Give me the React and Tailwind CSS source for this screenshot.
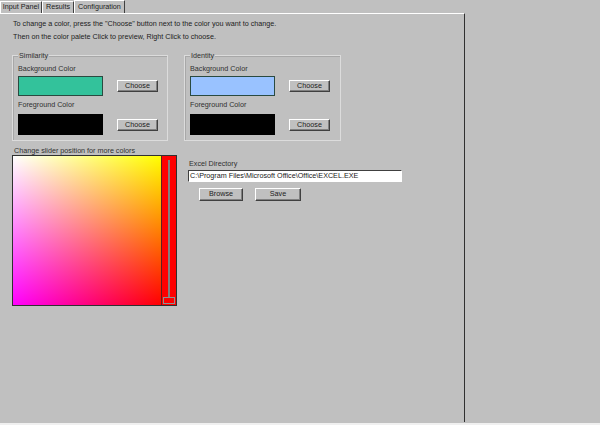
const font = { fontFamily: '"Liberation Sans", Arial, sans-serif' };

function Button({ label, className = '' }) {
  return (
    <div
      className={`flex items-center justify-center border border-t-white border-l-white border-r-[#404040] border-b-[#404040] bg-[#c0c0c0] text-[7.2px] text-[#202020] shadow-[inset_-1px_-1px_0_#808080] ${className}`}
    >
      {label}
    </div>
  );
}

function ColorGroup({ title, bg, className = '' }) {
  return (
    <div className={`relative h-[86px] border border-[#dcdcdc] shadow-[inset_1px_1px_0_#a8a8a8] ${className}`}>
      <span className="absolute -top-[5px] left-[5px] bg-[#c0c0c0] px-[1px] text-[7.2px] leading-[9px] text-[#303030]">
        {title}
      </span>
      <div className="flex flex-col px-[5px] pt-[8px]">
        <div className="text-[7.2px] leading-[9px] text-[#303030]">Background Color</div>
        <div className="mt-[3px] flex items-start">
          <div className="h-[20px] w-[85px] border border-[#2a4a40]" style={{ backgroundColor: bg }} />
          <Button label="Choose" className="ml-[14px] mt-[4px] h-[12px] w-[41px]" />
        </div>
        <div className="mt-[4px] text-[7.2px] leading-[9px] text-[#303030]">Foreground Color</div>
        <div className="mt-[5px] flex items-start">
          <div className="h-[21px] w-[85px] bg-black" />
          <Button label="Choose" className="ml-[14px] mt-[5px] h-[12px] w-[41px]" />
        </div>
      </div>
    </div>
  );
}

function Tab({ label, active, className = '' }) {
  return (
    <div
      className={`flex items-center justify-center whitespace-nowrap border-l border-t border-r border-l-white border-t-white border-r-[#404040] text-[7.2px] text-[#202020] ${active ? 'h-[13px]' : 'mt-[1px] h-[12px]'} ${className}`}
    >
      {label}
    </div>
  );
}

export default function App() {
  return (
    <div className="relative flex h-[425px] w-[600px] flex-col overflow-hidden bg-[#c0c0c0]" style={font}>
      <div className="flex h-[13px] items-end">
        <Tab label="Input Panel" className="w-[42px]" />
        <Tab label="Results" className="w-[32px]" />
        <Tab label="Configuration" active className="w-[51px]" />
      </div>

      <div className="flex h-[409px] w-[465px] flex-col border-t border-r border-t-white border-r-[#303030] pl-[12px]">
        <div className="pl-[1px] pt-[3px] text-[7.2px] leading-[13px] text-[#202020]">
          <div>To change a color, press the "Choose" button next to the color you want to change.</div>
          <div>Then on the color palete Click to preview, Right Click to choose.</div>
        </div>

        <div className="mt-[12px] flex gap-[16px]">
          <ColorGroup title="Similarity" bg="#33c29b" className="w-[156px]" />
          <ColorGroup title="Identity" bg="#99c2ff" className="w-[157px]" />
        </div>

        <div className="mt-[5px] flex">
          <div className="flex flex-col">
            <div className="pl-[2px] text-[7.2px] leading-[9px] text-[#303030]">Change slider position for more colors</div>
            <div className="flex h-[151px] w-[165px] border border-[#303030]">
              <div className="flex-1 bg-[#ff0000] bg-[linear-gradient(to_right,#0000ff,#000000),linear-gradient(to_bottom,#00ff00,#000000)] bg-blend-screen" />
              <div className="relative w-[15px] border-l border-[#602020] bg-[#ff0000]">
                <div className="absolute left-[6px] top-[4px] h-[137px] w-[2px] bg-[#808080]" />
                <div className="absolute bottom-[1px] left-[1px] h-[7px] w-[12px] border border-[#909090] bg-[#ff0000]" />
              </div>
            </div>
          </div>

          <div className="ml-[11px] mt-[13px] flex flex-col">
            <div className="pl-[1px] text-[7.2px] leading-[9px] text-[#303030]">Excel Directory</div>
            <div className="mt-[2px] flex h-[12px] w-[214px] items-center border border-t-[#404040] border-l-[#404040] border-r-white border-b-white bg-white pl-[1px] text-[7.2px] text-[#202020]">
              C:\Program Files\Microsoft Office\Office\EXCEL.EXE
            </div>
            <div className="mt-[6px] flex gap-[12px] pl-[11px]">
              <Button label="Browse" className="h-[13px] w-[44px]" />
              <Button label="Save" className="h-[13px] w-[46px]" />
            </div>
          </div>
        </div>
      </div>

      <div className="mt-[1px] h-[2px] w-full bg-[#f0f0f0]" />
    </div>
  );
}
